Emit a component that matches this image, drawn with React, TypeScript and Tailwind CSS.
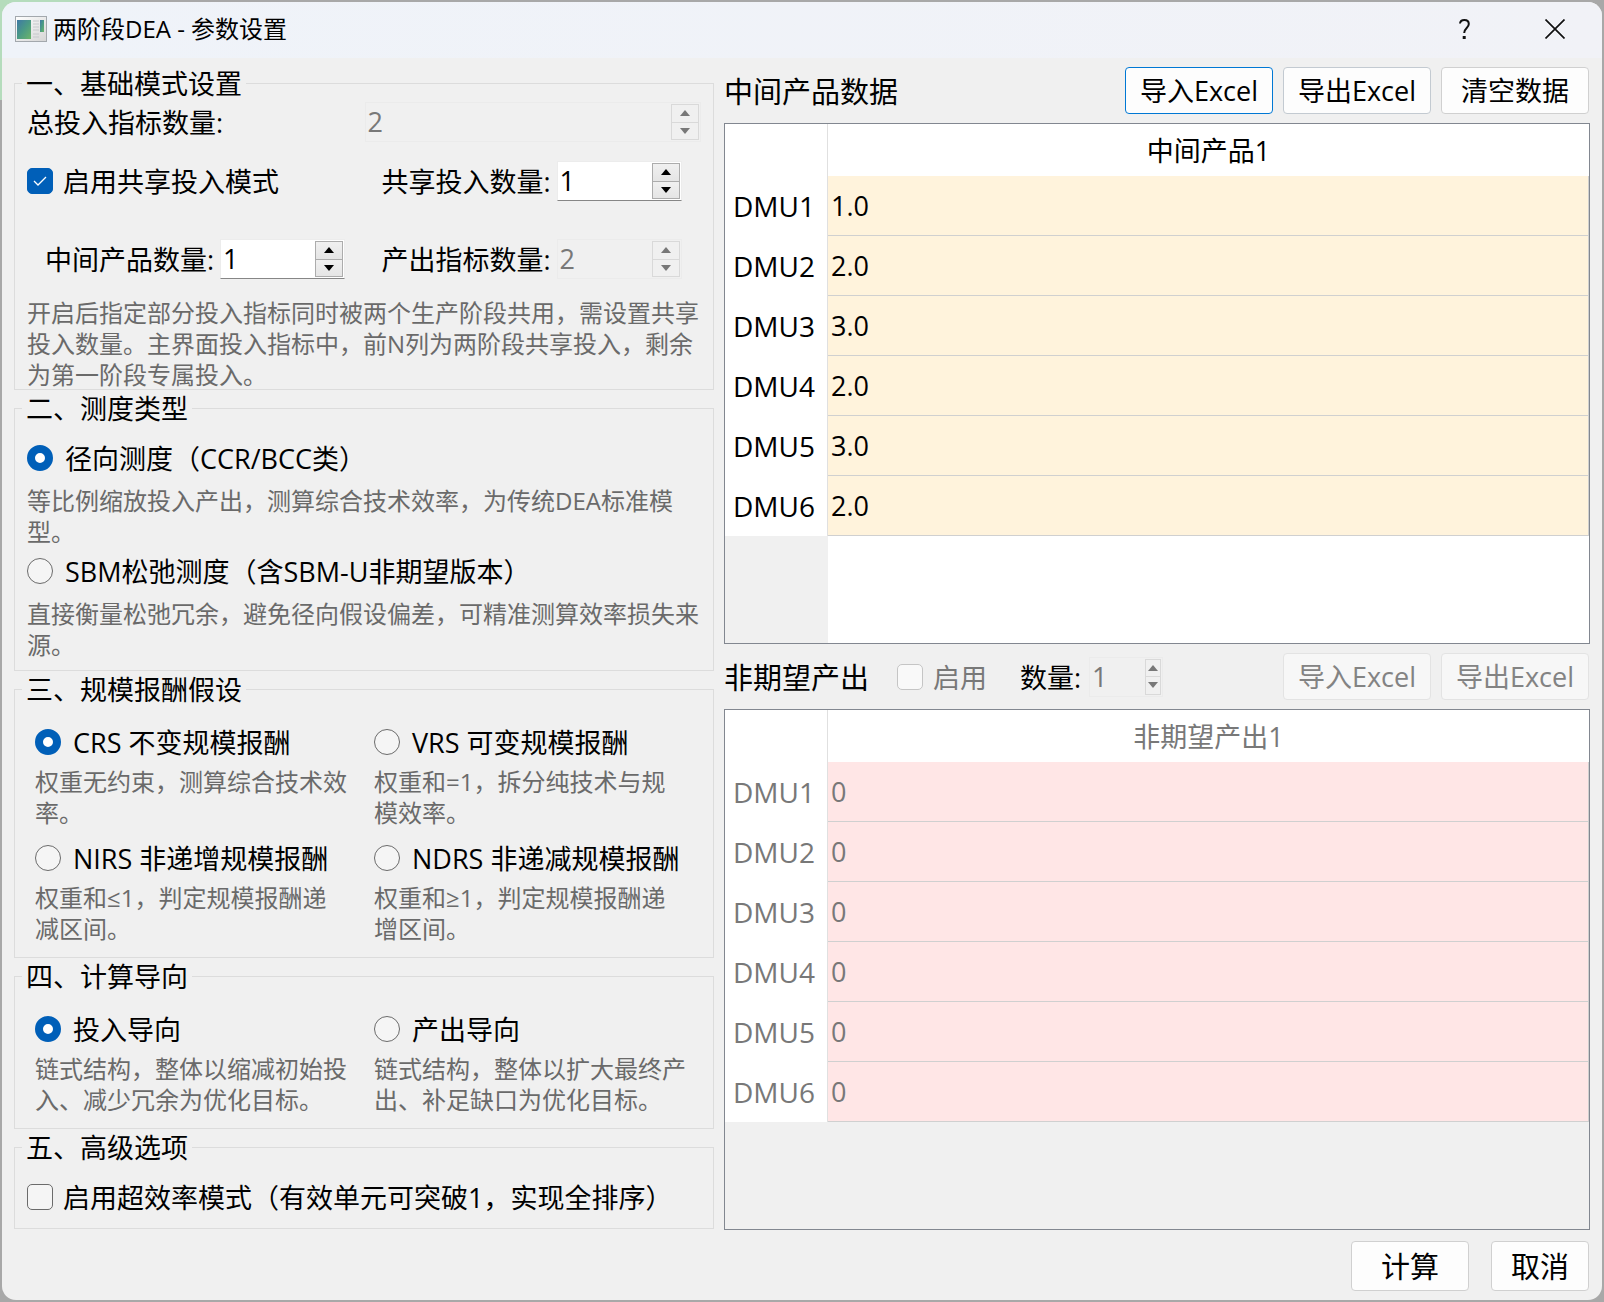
import React, { useId, useState } from 'react';
import clsx from 'clsx';

interface SpinBoxProps {
  id: string;
  defaultValue: number;
  disabled?: boolean;
  slim?: boolean;
  className?: string;
}

function SpinBox({ id, defaultValue, disabled, slim, className }: SpinBoxProps) {
  const [value, setValue] = useState(defaultValue);
  const step = clsx(
    'flex flex-1 items-center justify-center',
    disabled ? 'text-[#787878]' : 'bg-linear-to-b from-[#f0f0f0] to-[#e5e5e5] text-black'
  );

  return (
    <div
      className={clsx(
        'flex h-10 min-w-0 border pr-px',
        disabled ? 'border-[#ebebeb]' : 'border-[#ececec] border-b-[#868686] bg-white',
        className
      )}
    >
      <input
        id={id}
        type="number"
        value={value}
        disabled={disabled}
        onChange={(e) => setValue(Number(e.target.value))}
        className="min-w-0 flex-1 bg-transparent pl-[2px] outline-none [appearance:textfield] disabled:text-[#787878] [&::-webkit-inner-spin-button]:appearance-none"
      />
      <div
        className={clsx(
          'my-px flex flex-col divide-y border',
          slim ? 'w-4' : 'w-7',
          disabled ? 'divide-[#d9d9d9] border-[#d9d9d9]' : 'divide-[#acacac] border-[#acacac]'
        )}
      >
        <button type="button" aria-label="增加" disabled={disabled} onClick={() => setValue(value + 1)} className={step}>
          <svg width="10" height="6" viewBox="0 0 10 6"><path d="M5 0 10 6H0Z" fill="currentColor" /></svg>
        </button>
        <button type="button" aria-label="减少" disabled={disabled} onClick={() => setValue(value - 1)} className={step}>
          <svg width="10" height="6" viewBox="0 0 10 6"><path d="M0 0H10L5 6Z" fill="currentColor" /></svg>
        </button>
      </div>
    </div>
  );
}

interface CheckProps {
  label: string;
  defaultChecked?: boolean;
  disabled?: boolean;
}

function Check({ label, defaultChecked, disabled }: CheckProps) {
  return (
    <label className={clsx('flex h-9 items-center gap-[10px]', disabled && 'text-[#787878]')}>
      <span className="grid size-[26px] shrink-0 place-items-center">
        <input
          type="checkbox"
          defaultChecked={defaultChecked}
          disabled={disabled}
          className="peer col-start-1 row-start-1 size-[26px] appearance-none rounded-[5px] border border-[#6b6b6b] bg-[#f5f5f5] checked:border-[#005fb8] checked:bg-[#005fb8] disabled:border-[#c5c5c5] disabled:bg-[#f9f9f9]"
        />
        <svg
          width="14"
          height="10"
          viewBox="0 0 14 10"
          className="pointer-events-none invisible col-start-1 row-start-1 peer-checked:visible"
        >
          <path d="M1 5 5 9 13 1" fill="none" stroke="white" strokeWidth="1.3" />
        </svg>
      </span>
      <span className="pt-[2px]">{label}</span>
    </label>
  );
}

interface OptionProps {
  name: string;
  label: string;
  hint: string;
  defaultChecked?: boolean;
  className?: string;
}

function Option({ name, label, hint, defaultChecked, className }: OptionProps) {
  const id = useId();
  return (
    <div className={clsx('flex flex-col', className)}>
      <label className="flex h-9 items-center gap-3 whitespace-nowrap">
        <input
          type="radio"
          name={name}
          defaultChecked={defaultChecked}
          aria-describedby={id}
          className="size-[26px] shrink-0 appearance-none rounded-full border border-[#6b6b6b] bg-[#f5f5f5] checked:border-8 checked:border-[#005fb8] checked:bg-white"
        />
        <span className="pt-[2px]">{label}</span>
      </label>
      <Hint id={id}>{hint}</Hint>
    </div>
  );
}

function Hint({ id, children }: { id?: string; children: React.ReactNode }) {
  return <p id={id} className="text-[24px] leading-[31px] text-[#6a6a6a]">{children}</p>;
}

function Group({ title, className, children }: { title: string; className?: string; children: React.ReactNode }) {
  return (
    <fieldset className={clsx('min-w-0 border border-[#dcdcdc] px-3', className)}>
      <legend className="-ml-[5px] h-8 px-1 pt-[2px] leading-[30px]">{title}</legend>
      {children}
    </fieldset>
  );
}

function PushButton({ children, className, disabled }: { children: React.ReactNode; className?: string; disabled?: boolean }) {
  return (
    <button
      type="button"
      disabled={disabled}
      className={clsx(
        'rounded-[4px] border',
        disabled ? 'border-[#e3e3e3] bg-[#f7f7f7] text-[#838383]' : 'bg-[#fdfdfd]',
        className
      )}
    >
      {children}
    </button>
  );
}

interface DataGridProps {
  column: string;
  values: string[];
  disabled?: boolean;
}

function DataGrid({ column, values, disabled }: DataGridProps) {
  return (
    <div className={clsx('flex flex-1 flex-col border border-[#828790]', disabled && 'text-[#787878]')}>
      <table className="w-full table-fixed border-separate border-spacing-0 bg-white">
        <thead>
          <tr className="h-[52px]">
            <td className="w-[103px] border-r border-[#e0e0e0]" />
            <th className="pt-[2px] font-normal">{column}</th>
          </tr>
        </thead>
        <tbody>
          {values.map((v, i) => (
            <tr key={i} className="h-[60px]">
              <th className="border-r border-[#e0e0e0] pl-2 text-left text-[28px] font-normal">DMU{i + 1}</th>
              <td
                className={clsx(
                  'border-r border-b border-[#d0d0d0] pl-[3px]',
                  disabled ? 'bg-[#ffe6e6]' : 'bg-[#fff3dc]'
                )}
              >
                {v}
              </td>
            </tr>
          ))}
        </tbody>
      </table>
      <div className="flex flex-1">
        <div className="w-[103px]" />
        <div className={clsx('flex-1', !disabled && 'bg-white')} />
      </div>
    </div>
  );
}

function TitleBar() {
  return (
    <header className="flex h-14 items-center bg-linear-to-r from-[#eff3f9] to-[#f1f2f7] pr-[2px] pb-[2px] pl-[13px]">
      <svg width="32" height="26" viewBox="0 0 32 26" className="mr-[6px]">
        <defs>
          <linearGradient id="pane" x1="0" y1="0" x2="1" y2="1">
            <stop offset="0" stopColor="#3f78a6" />
            <stop offset="0.5" stopColor="#4a9a85" />
            <stop offset="1" stopColor="#6cb56a" />
          </linearGradient>
          <linearGradient id="frame" x1="0" y1="0" x2="1" y2="1">
            <stop offset="0" stopColor="#ffffff" />
            <stop offset="1" stopColor="#d5d5d5" />
          </linearGradient>
        </defs>
        <rect x="0.5" y="0.5" width="31" height="25" fill="url(#frame)" stroke="#a3a8ad" />
        <rect x="2" y="4" width="14" height="19" fill="url(#pane)" />
        <path d="M18 5h6M18 8h6M18 11h6M18 14h6M18 18h6M18 21h6" stroke="#c6c9cc" />
        <rect x="25" y="4" width="4" height="12" fill="url(#pane)" />
      </svg>
      <h1 className="flex-1 text-[24px]">两阶段DEA - 参数设置</h1>
      <button type="button" aria-label="帮助" className="flex h-full w-[92px] items-center justify-center">
        <svg width="11" height="20" viewBox="0 0 11 20" fill="none" stroke="#111" strokeWidth="2">
          <path d="M1 4.5C1.3 2 3 1 5.3 1 8 1 9.8 2.5 9.8 5 9.8 9 5.2 9 5.2 14" />
          <path d="M5.2 17v3" strokeWidth="3" />
        </svg>
      </button>
      <button type="button" aria-label="关闭" className="flex h-full w-[90px] items-center justify-center">
        <svg width="20" height="20" viewBox="0 0 20 20">
          <path d="M0.5 0.5 19.5 19.5M19.5 0.5 0.5 19.5" stroke="#111" strokeWidth="1.7" />
        </svg>
      </button>
    </header>
  );
}

const returnsToScale = [
  { label: 'CRS 不变规模报酬', hint: '权重无约束，测算综合技术效率。' },
  { label: 'VRS 可变规模报酬', hint: '权重和=1，拆分纯技术与规模效率。' },
  { label: 'NIRS 非递增规模报酬', hint: '权重和≤1，判定规模报酬递减区间。' },
  { label: 'NDRS 非递减规模报酬', hint: '权重和≥1，判定规模报酬递增区间。' },
];

export default function App() {
  return (
    <div className="flex min-h-screen flex-col bg-[#a8a8a8] bg-[radial-gradient(circle_at_0_0,#b5dcbc_0,#b5dcbc_100px,#a8a8a8_100px)] p-[2px] font-['Open_Sans','Noto_Sans_CJK_SC',sans-serif] text-[27px] leading-9 text-black">
      <div className="flex flex-1 flex-col overflow-hidden rounded-[14px] bg-[#f0f0f0]">
        <TitleBar />
        <main className="flex flex-1 flex-col px-3 py-[9px]">
          <div className="grid flex-1 grid-cols-[700fr_866fr] gap-[10px]">
            <div className="flex min-w-0 flex-col gap-[2px]">
              <Group title="一、基础模式设置">
                <div className="grid grid-cols-[337fr_336fr] items-center pt-[3px]">
                  <label htmlFor="inputs" className="pt-[2px]">总投入指标数量:</label>
                  <SpinBox id="inputs" defaultValue={2} disabled />
                </div>
                <div className="mt-[19px] grid grid-cols-[354fr_319fr] items-center">
                  <Check label="启用共享投入模式" defaultChecked />
                  <div className="flex items-center gap-[6px]">
                    <label htmlFor="shared" className="pt-[2px]">共享投入数量:</label>
                    <SpinBox id="shared" defaultValue={1} className="w-[125px]" />
                  </div>
                </div>
                <div className="mt-[38px] grid grid-cols-[354fr_319fr] items-center">
                  <div className="flex items-center gap-[6px] pl-[18px]">
                    <label htmlFor="middle" className="pt-[2px]">中间产品数量:</label>
                    <SpinBox id="middle" defaultValue={1} className="w-[125px]" />
                  </div>
                  <div className="flex items-center gap-[6px]">
                    <label htmlFor="outputs" className="pt-[2px]">产出指标数量:</label>
                    <SpinBox id="outputs" defaultValue={2} disabled className="w-[125px]" />
                  </div>
                </div>
                <div className="mt-[18px] -mb-px">
                  <Hint>开启后指定部分投入指标同时被两个生产阶段共用，需设置共享投入数量。主界面投入指标中，前N列为两阶段共享投入，剩余为第一阶段专属投入。</Hint>
                </div>
              </Group>

              <Group title="二、测度类型">
                <div className="flex flex-col gap-[6px] pt-4 pb-[10px]">
                  <Option
                    name="measure"
                    label="径向测度（CCR/BCC类）"
                    hint="等比例缩放投入产出，测算综合技术效率，为传统DEA标准模型。"
                    defaultChecked
                    className="gap-[9px]"
                  />
                  <Option
                    name="measure"
                    label="SBM松弛测度（含SBM-U非期望版本）"
                    hint="直接衡量松弛冗余，避免径向假设偏差，可精准测算效率损失来源。"
                    className="gap-[9px]"
                  />
                </div>
              </Group>

              <Group title="三、规模报酬假设">
                <div className="grid grid-cols-2 gap-x-[25px] gap-y-3 pt-[19px] pr-[13px] pb-[13px] pl-2">
                  {returnsToScale.map((o, i) => (
                    <Option key={o.label} name="rts" {...o} defaultChecked={i === 0} className="gap-[6px]" />
                  ))}
                </div>
              </Group>

              <Group title="四、计算导向">
                <div className="grid grid-cols-2 gap-x-[25px] pt-[19px] pr-[13px] pb-[13px] pl-2">
                  <Option
                    name="orientation"
                    label="投入导向"
                    hint="链式结构，整体以缩减初始投入、减少冗余为优化目标。"
                    defaultChecked
                    className="gap-[6px]"
                  />
                  <Option
                    name="orientation"
                    label="产出导向"
                    hint="链式结构，整体以扩大最终产出、补足缺口为优化目标。"
                    className="gap-[6px]"
                  />
                </div>
              </Group>

              <Group title="五、高级选项">
                <div className="pt-4 pb-[13px]">
                  <Check label="启用超效率模式（有效单元可突破1，实现全排序）" />
                </div>
              </Group>
            </div>

            <div className="flex min-w-0 flex-col">
              <div className="flex h-[47px] items-center gap-[10px] pr-px">
                <h2 className="flex-1 pt-[2px] text-[29px]">中间产品数据</h2>
                <PushButton className="h-[47px] w-[148px] border-[#0078d4]">导入Excel</PushButton>
                <PushButton className="h-[47px] w-[148px] border-[#c3cad1]">导出Excel</PushButton>
                <PushButton className="h-[47px] w-[148px] border-[#d0d0d0]">清空数据</PushButton>
              </div>
              <div className="mt-[9px] flex flex-1 flex-col">
                <DataGrid column="中间产品1" values={['1.0', '2.0', '3.0', '2.0', '3.0', '2.0']} />
              </div>
              <div className="mt-[9px] flex h-[47px] items-center gap-[10px] pr-px">
                <h2 className="pt-[2px] text-[29px]">非期望产出</h2>
                <div className="ml-[18px]">
                  <Check label="启用" disabled />
                </div>
                <div className="ml-[23px] flex flex-1 items-center gap-2">
                  <label htmlFor="undesirable" className="pt-[2px]">数量:</label>
                  <SpinBox id="undesirable" defaultValue={1} disabled slim className="w-[74px]" />
                </div>
                <PushButton disabled className="h-[47px] w-[148px]">导入Excel</PushButton>
                <PushButton disabled className="h-[47px] w-[148px]">导出Excel</PushButton>
              </div>
              <div className="mt-[9px] flex flex-1 flex-col">
                <DataGrid column="非期望产出1" values={['0', '0', '0', '0', '0', '0']} disabled />
              </div>
            </div>
          </div>

          <div className="mt-[11px] flex justify-end gap-[22px] pr-px text-[29px]">
            <PushButton className="h-[50px] w-[118px] border-[#d0d0d0] pt-[2px]">计算</PushButton>
            <PushButton className="h-[50px] w-[98px] border-[#d0d0d0] pt-[2px]">取消</PushButton>
          </div>
        </main>
      </div>
    </div>
  );
}
